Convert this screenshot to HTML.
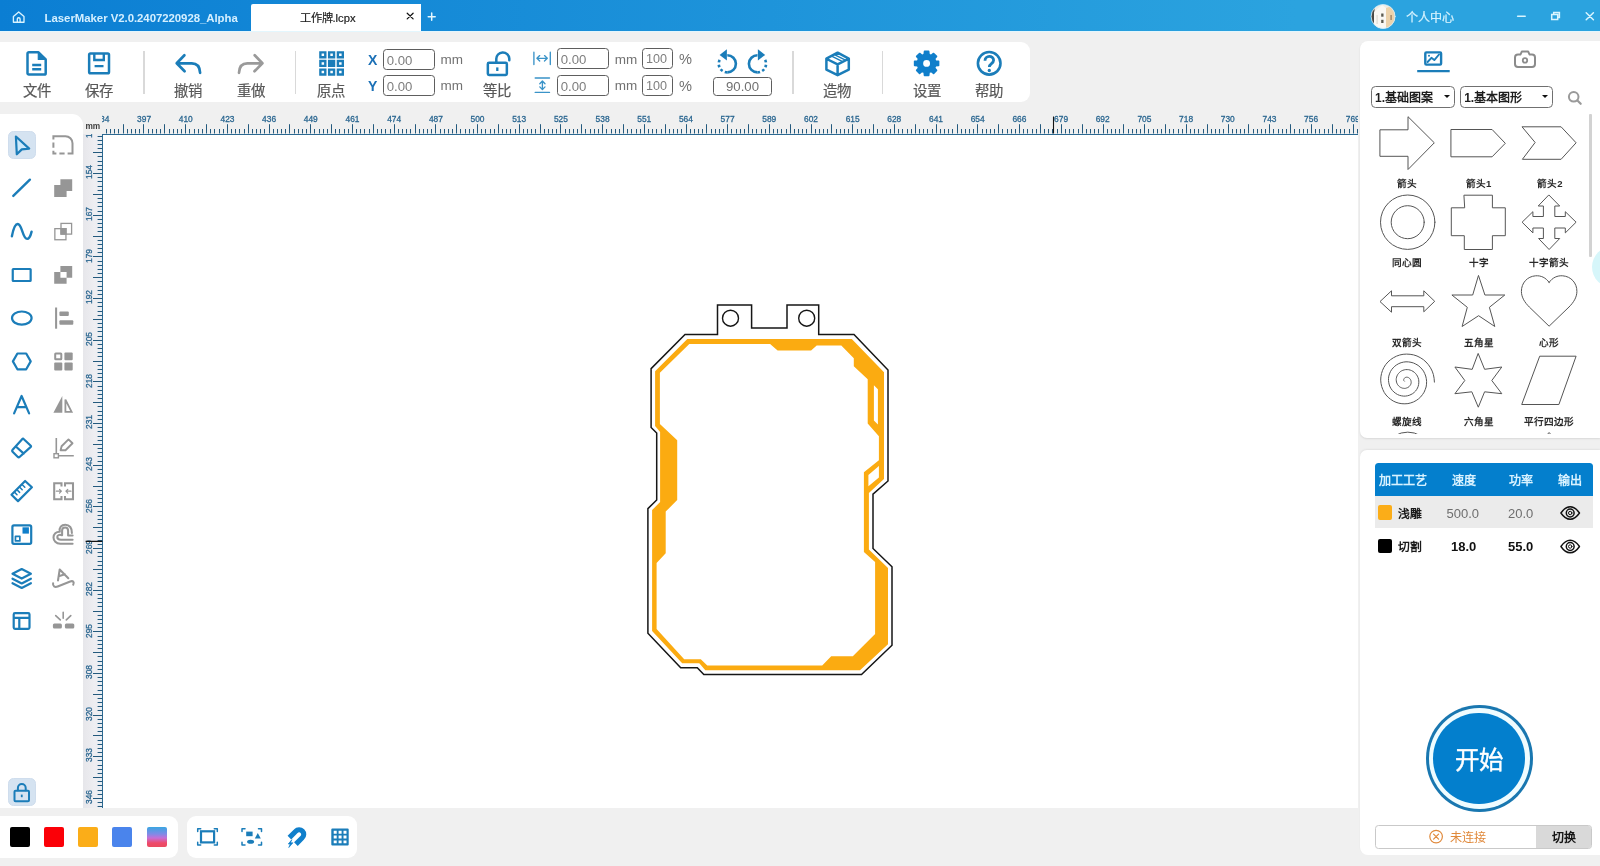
<!DOCTYPE html>
<html lang="zh-CN">
<head>
<meta charset="utf-8">
<title>LaserMaker V2.0.2407220928_Alpha</title>
<style>
html,body{margin:0;padding:0}
body{width:1600px;height:866px;overflow:hidden;position:relative;background:#f0f0f0;will-change:transform;font-family:"Liberation Sans",sans-serif;color:#222}
div,span{position:absolute;box-sizing:border-box;white-space:nowrap}
svg{position:absolute;left:0;top:0;overflow:visible}
.panel{background:#fff}
/* title bar */
#titlebar{left:0;top:0;width:1600px;height:30.5px;background:linear-gradient(90deg,#0b7ed3 0%,#2ba3df 81%,#2ba3df 100%)}
#titleline{left:0;top:30.5px;width:1600px;height:1.5px;background:#e3f6fd}
#tab{left:251px;top:3.7px;width:170px;height:27.5px;background:#fff;border-radius:2px 0 0 0}
#tabname{left:48.5px;top:4px;height:20px;line-height:20px;font-size:11.2px;font-weight:500;color:#1c1c1c;-webkit-text-stroke:.2px #1c1c1c}
#user{left:1406px;top:7.5px;height:20px;line-height:20px;font-size:12.1px;font-weight:500;color:#d6f3ff;-webkit-text-stroke:.2px #d6f3ff}
/* toolbar */
#toolbar{left:0;top:42px;width:1030px;height:60px;border-radius:0 9px 9px 0}
.tlabel{top:40.4px;height:18px;line-height:18px;font-size:14.4px;font-weight:500;color:#585858;-webkit-text-stroke:.2px #585858;text-align:center;width:60px}
.vsep{top:8.5px;width:1.5px;height:43px;background:#d9d9d9}
.inp{height:20.6px;border:1px solid #5e5e5e;border-radius:3.5px;background:#fff;font-size:13.2px;line-height:21.6px;color:#7e7e7e;padding-left:2.6px}
.unit{height:20px;line-height:21px;font-size:13.5px;color:#727272}
.xy{height:20px;line-height:20px;font-size:14px;font-weight:700;color:#1b70b6}
/* left tools */
#tools{left:0;top:113.6px;width:83px;height:694.4px;border-radius:0 11px 0 0}
.sel{width:27.8px;height:28px;border-radius:5.5px;background:#d5e3f1;border:1px solid #cfdded}
/* rulers */
#vruler{left:83.3px;top:133.5px;width:19.1px;height:674.5px;background:linear-gradient(90deg,#e6e6ea,#eeeef2 60%,#e9edf2);overflow:hidden}
#hruler{left:102.4px;top:113px;width:1255.8px;height:20.5px;overflow:hidden}
.hl{top:1.1px;width:30px;margin-left:-15px;text-align:center;height:10px;line-height:10px;font-size:8.4px;font-weight:400;color:#2a6690;-webkit-text-stroke:.28px #2a6690}
.vl{left:-8.9px;width:30px;height:10px;margin-top:-5px;line-height:10px;text-align:center;font-size:8.4px;font-weight:400;color:#2a6690;-webkit-text-stroke:.28px #2a6690;transform:rotate(-90deg)}
#canvas{left:102.4px;top:133.5px;width:1255.8px;height:674.6px;background:#fff;border-left:1px solid #2d6a92;border-top:1px solid #2d6a92}
/* bottom */
#swatches{left:0;top:816px;width:177.5px;height:42px;border-radius:0 9px 9px 0}
.sw{top:11px;width:20px;height:20px;border-radius:2px}
#viewtools{left:186.9px;top:816px;width:170.4px;height:42px;border-radius:9px}
/* right side */
#library{left:1360.2px;top:40.7px;width:239.8px;height:397px;border-radius:8px 0 0 7px;overflow:hidden;box-shadow:0 1px 2px rgba(0,0,0,.10)}
.dd{top:45.6px;height:21.4px;border:1px solid #707070;border-radius:4.5px;background:#fff;font-size:12px;font-weight:700;line-height:23.2px;color:#1e1e1e;padding-left:3px}
.caret{top:8.2px;width:0;height:0;border-left:3.2px solid transparent;border-right:3.2px solid transparent;border-top:3.6px solid #111}
.slabel{width:72px;margin-left:-36px;height:12px;line-height:12px;text-align:center;font-size:9.6px;font-weight:700;color:#2a2a2a}
#process{left:1360.2px;top:449.6px;width:239.8px;height:405px;border-radius:7px 0 0 8px;box-shadow:0 -1px 2px rgba(0,0,0,.06)}
#thead{left:14.8px;top:13.6px;width:218.2px;height:32.6px;background:#047fcd;border-radius:3.5px 3.5px 0 0;color:#d8f2ff;font-size:12.1px;font-weight:700}
#thead span{top:10.2px;height:16px;line-height:16px;width:60px;margin-left:-30px;text-align:center}
.row{left:14.8px;width:218.2px;height:32.6px}
.row span{top:10.5px;height:16px;line-height:16px}
.row .c{width:60px;margin-left:-30px;text-align:center;font-size:13px}
.row .n{left:23.3px;font-size:11.8px;font-weight:700;color:#1a1a1a}
.chip{left:2.7px;top:9.6px;width:14.6px;height:14.6px;border-radius:2px}
#start{left:65.8px;top:255.6px;width:106.6px;height:106.6px;border-radius:50%;background:#1977b0}
#start i{position:absolute;left:3px;top:3px;right:3px;bottom:3px;border-radius:50%;background:#effcff}
#start b{position:absolute;left:7.5px;top:7.5px;right:7.5px;bottom:7.5px;border-radius:50%;background:#037fcd;color:#fff;font-weight:500;font-size:24.5px;line-height:95px;-webkit-text-stroke:.4px #fff;text-align:center;letter-spacing:0}
#status{left:15.2px;top:375px;width:216.5px;height:24px;border:1px solid #c9c9c9;border-radius:3.5px;background:#fff;overflow:hidden}
#status .msg{left:73.5px;top:4.6px;height:16px;line-height:16px;font-size:12.1px;color:#e0893b}
#status .btn{left:159.5px;top:-1px;width:57px;height:24px;background:#d9d9d9;text-align:center;line-height:27px;font-size:12px;color:#141414;font-weight:700}
</style>
</head>
<body>

<!-- ===== title bar ===== -->
<div id="titlebar">
  <svg id="apptitle" width="260" height="30.5" viewBox="0 0 260 30.5"><text x="44.6" y="22" textLength="193.2" lengthAdjust="spacing" font-family="Liberation Sans, sans-serif" font-size="11.4" font-weight="700" fill="#d4efff">LaserMaker V2.0.2407220928_Alpha</text></svg>
  <div id="tab"><span id="tabname">工作牌.lcpx</span></div>
  <span id="user">个人中心</span>
</div>
<div id="titleline"></div>

<!-- ===== main toolbar ===== -->
<div id="toolbar" class="panel">
  <span class="tlabel" style="left:6.8px">文件</span>
  <span class="tlabel" style="left:69.4px">保存</span>
  <div class="vsep" style="left:143.3px"></div>
  <span class="tlabel" style="left:158.1px">撤销</span>
  <span class="tlabel" style="left:221px">重做</span>
  <div class="vsep" style="left:294.9px"></div>
  <span class="tlabel" style="left:301.3px">原点</span>
  <span class="xy" style="left:368px;top:8px">X</span>
  <span class="xy" style="left:368px;top:33.6px">Y</span>
  <div class="inp" style="left:383.1px;top:7.1px;width:51.9px">0.00</div>
  <div class="inp" style="left:383.1px;top:33.1px;width:51.9px">0.00</div>
  <span class="unit" style="left:440.6px;top:7.2px">mm</span>
  <span class="unit" style="left:440.6px;top:33px">mm</span>
  <span class="tlabel" style="left:467.2px">等比</span>
  <div class="inp" style="left:557.2px;top:6.3px;width:51.6px">0.00</div>
  <div class="inp" style="left:557.2px;top:33.1px;width:51.6px">0.00</div>
  <span class="unit" style="left:614.7px;top:7px">mm</span>
  <span class="unit" style="left:614.7px;top:33.4px">mm</span>
  <div class="inp" style="left:642.2px;top:6.3px;width:30.6px;font-size:12.6px;padding-left:2.8px">100</div>
  <div class="inp" style="left:642.2px;top:33.1px;width:30.6px;font-size:12.6px;padding-left:2.8px">100</div>
  <span class="unit" style="left:679px;top:7px;font-size:14.6px">%</span>
  <span class="unit" style="left:679px;top:33.8px;font-size:14.6px">%</span>
  <div class="inp" style="left:713.1px;top:35.2px;width:58.8px;height:18.6px;line-height:17.5px;padding-left:0;text-align:center;color:#707070">90.00</div>
  <div class="vsep" style="left:792.4px"></div>
  <span class="tlabel" style="left:807.2px">造物</span>
  <div class="vsep" style="left:881.8px"></div>
  <span class="tlabel" style="left:896.5px">设置</span>
  <span class="tlabel" style="left:958.9px">帮助</span>
</div>

<!-- ===== left tool palette ===== -->
<div id="tools" class="panel">
  <div class="sel" style="left:7.8px;top:17.3px"></div>
  <div class="sel" style="left:7.8px;top:664.3px"></div>
</div>

<!-- ===== rulers + canvas ===== -->
<div id="hruler"><span class="hl" style="left:0.0px">384</span><span class="hl" style="left:41.7px">397</span><span class="hl" style="left:83.4px">410</span><span class="hl" style="left:125.1px">423</span><span class="hl" style="left:166.7px">436</span><span class="hl" style="left:208.4px">449</span><span class="hl" style="left:250.1px">461</span><span class="hl" style="left:291.8px">474</span><span class="hl" style="left:333.5px">487</span><span class="hl" style="left:375.1px">500</span><span class="hl" style="left:416.8px">513</span><span class="hl" style="left:458.5px">525</span><span class="hl" style="left:500.2px">538</span><span class="hl" style="left:541.9px">551</span><span class="hl" style="left:583.5px">564</span><span class="hl" style="left:625.2px">577</span><span class="hl" style="left:666.9px">589</span><span class="hl" style="left:708.6px">602</span><span class="hl" style="left:750.3px">615</span><span class="hl" style="left:791.9px">628</span><span class="hl" style="left:833.6px">641</span><span class="hl" style="left:875.3px">654</span><span class="hl" style="left:917.0px">666</span><span class="hl" style="left:958.7px">679</span><span class="hl" style="left:1000.3px">692</span><span class="hl" style="left:1042.0px">705</span><span class="hl" style="left:1083.7px">718</span><span class="hl" style="left:1125.4px">730</span><span class="hl" style="left:1167.1px">743</span><span class="hl" style="left:1208.7px">756</span><span class="hl" style="left:1250.4px">769</span></div>
<div id="vruler"><span class="vl" style="top:-3.0px">141</span><span class="vl" style="top:38.7px">154</span><span class="vl" style="top:80.4px">167</span><span class="vl" style="top:122.0px">179</span><span class="vl" style="top:163.7px">192</span><span class="vl" style="top:205.3px">205</span><span class="vl" style="top:247.0px">218</span><span class="vl" style="top:288.7px">231</span><span class="vl" style="top:330.3px">243</span><span class="vl" style="top:372.0px">256</span><span class="vl" style="top:413.6px">269</span><span class="vl" style="top:455.3px">282</span><span class="vl" style="top:497.0px">295</span><span class="vl" style="top:538.6px">308</span><span class="vl" style="top:580.3px">320</span><span class="vl" style="top:621.9px">333</span><span class="vl" style="top:663.6px">346</span></div>
<div id="canvas"></div>

<!-- ===== bottom bars ===== -->
<div id="swatches" class="panel">
  <div class="sw" style="left:10px;background:#000"></div>
  <div class="sw" style="left:44.1px;background:#fb0007"></div>
  <div class="sw" style="left:78.1px;background:#fbad18"></div>
  <div class="sw" style="left:112.4px;background:#4a84ec"></div>
  <div class="sw" style="left:146.8px;background:linear-gradient(180deg,#3aa6e2 0%,#7f8be6 35%,#c66fd6 55%,#ee4a6a 80%,#ea4a5e 100%)"></div>
</div>
<div id="viewtools" class="panel"></div>

<!-- ===== right: shape library ===== -->
<div id="library" class="panel">
  <div class="dd" style="left:10.9px;width:84.4px">1.基础图案<div class="caret" style="left:72.4px"></div></div>
  <div class="dd" style="left:100px;width:92.6px">1.基本图形<div class="caret" style="left:80.8px"></div></div>
  <span class="slabel" style="left:47.1px;top:137.4px">箭头</span>
  <span class="slabel" style="left:118.4px;top:137.4px">箭头1</span>
  <span class="slabel" style="left:189.7px;top:137.4px">箭头2</span>
  <span class="slabel" style="left:47.3px;top:216.4px">同心圆</span>
  <span class="slabel" style="left:118.5px;top:216.4px">十字</span>
  <span class="slabel" style="left:189.2px;top:216.4px">十字箭头</span>
  <span class="slabel" style="left:47.3px;top:295.9px">双箭头</span>
  <span class="slabel" style="left:118.4px;top:295.9px">五角星</span>
  <span class="slabel" style="left:188.9px;top:295.9px">心形</span>
  <span class="slabel" style="left:47.3px;top:375.1px">螺旋线</span>
  <span class="slabel" style="left:118.4px;top:375.1px">六角星</span>
  <span class="slabel" style="left:188.9px;top:375.1px">平行四边形</span>
  <div style="left:228.6px;top:73px;width:3.6px;height:143px;background:#d2d2d2;border-radius:1px"></div>
  <div style="left:231.6px;top:205px;width:42px;height:42px;border-radius:50%;background:#d6f6fa"></div>
</div>

<!-- ===== right: process panel ===== -->
<div id="process" class="panel">
  <div id="thead">
    <span style="left:28.4px">加工工艺</span>
    <span style="left:88.8px">速度</span>
    <span style="left:146px">功率</span>
    <span style="left:195px">输出</span>
  </div>
  <div class="row" style="top:46.2px;background:#ebebeb">
    <div class="chip" style="background:#fbad18"></div>
    <span class="n">浅雕</span>
    <span class="c" style="left:87.8px;color:#6e6e6e">500.0</span>
    <span class="c" style="left:145.6px;color:#6e6e6e">20.0</span>
  </div>
  <div class="row" style="top:78.8px">
    <div class="chip" style="background:#000;top:10.2px"></div>
    <span class="n" style="top:10.8px">切割</span>
    <span class="c" style="left:88.6px;top:10.9px;font-weight:700;color:#111">18.0</span>
    <span class="c" style="left:145.6px;top:10.9px;font-weight:700;color:#111">55.0</span>
  </div>
  <div id="start"><i></i><b>开始</b></div>
  <div id="status">
    <span class="msg">未连接</span>
    <div class="btn">切换</div>
  </div>
</div>


<!-- ===== ruler ticks + canvas artwork ===== -->
<svg id="artwork" width="1600" height="866" viewBox="0 0 1600 866">
    <path d="M106.5 129V133.5M110.5 129V133.5M114.5 129V133.5M118.5 129V133.5M123.5 124.2V133.5M127.5 129V133.5M131.5 129V133.5M135.5 129V133.5M139.5 129V133.5M143.5 124.2V133.5M148.5 129V133.5M152.5 129V133.5M156.5 129V133.5M160.5 129V133.5M164.5 124.2V133.5M169.5 129V133.5M173.5 129V133.5M177.5 129V133.5M181.5 129V133.5M185.5 124.2V133.5M189.5 129V133.5M194.5 129V133.5M198.5 129V133.5M202.5 129V133.5M206.5 124.2V133.5M210.5 129V133.5M214.5 129V133.5M219.5 129V133.5M223.5 129V133.5M227.5 124.2V133.5M231.5 129V133.5M235.5 129V133.5M239.5 129V133.5M244.5 129V133.5M248.5 124.2V133.5M252.5 129V133.5M256.5 129V133.5M260.5 129V133.5M264.5 129V133.5M269.5 124.2V133.5M273.5 129V133.5M277.5 129V133.5M281.5 129V133.5M285.5 129V133.5M289.5 124.2V133.5M294.5 129V133.5M298.5 129V133.5M302.5 129V133.5M306.5 129V133.5M310.5 124.2V133.5M314.5 129V133.5M319.5 129V133.5M323.5 129V133.5M327.5 129V133.5M331.5 124.2V133.5M335.5 129V133.5M339.5 129V133.5M344.5 129V133.5M348.5 129V133.5M352.5 124.2V133.5M356.5 129V133.5M360.5 129V133.5M364.5 129V133.5M369.5 129V133.5M373.5 124.2V133.5M377.5 129V133.5M381.5 129V133.5M385.5 129V133.5M390.5 129V133.5M394.5 124.2V133.5M398.5 129V133.5M402.5 129V133.5M406.5 129V133.5M410.5 129V133.5M415.5 124.2V133.5M419.5 129V133.5M423.5 129V133.5M427.5 129V133.5M431.5 129V133.5M435.5 124.2V133.5M440.5 129V133.5M444.5 129V133.5M448.5 129V133.5M452.5 129V133.5M456.5 124.2V133.5M460.5 129V133.5M465.5 129V133.5M469.5 129V133.5M473.5 129V133.5M477.5 124.2V133.5M481.5 129V133.5M485.5 129V133.5M490.5 129V133.5M494.5 129V133.5M498.5 124.2V133.5M502.5 129V133.5M506.5 129V133.5M510.5 129V133.5M515.5 129V133.5M519.5 124.2V133.5M523.5 129V133.5M527.5 129V133.5M531.5 129V133.5M535.5 129V133.5M540.5 124.2V133.5M544.5 129V133.5M548.5 129V133.5M552.5 129V133.5M556.5 129V133.5M560.5 124.2V133.5M565.5 129V133.5M569.5 129V133.5M573.5 129V133.5M577.5 129V133.5M581.5 124.2V133.5M585.5 129V133.5M590.5 129V133.5M594.5 129V133.5M598.5 129V133.5M602.5 124.2V133.5M606.5 129V133.5M611.5 129V133.5M615.5 129V133.5M619.5 129V133.5M623.5 124.2V133.5M627.5 129V133.5M631.5 129V133.5M636.5 129V133.5M640.5 129V133.5M644.5 124.2V133.5M648.5 129V133.5M652.5 129V133.5M656.5 129V133.5M661.5 129V133.5M665.5 124.2V133.5M669.5 129V133.5M673.5 129V133.5M677.5 129V133.5M681.5 129V133.5M686.5 124.2V133.5M690.5 129V133.5M694.5 129V133.5M698.5 129V133.5M702.5 129V133.5M706.5 124.2V133.5M711.5 129V133.5M715.5 129V133.5M719.5 129V133.5M723.5 129V133.5M727.5 124.2V133.5M731.5 129V133.5M736.5 129V133.5M740.5 129V133.5M744.5 129V133.5M748.5 124.2V133.5M752.5 129V133.5M756.5 129V133.5M761.5 129V133.5M765.5 129V133.5M769.5 124.2V133.5M773.5 129V133.5M777.5 129V133.5M781.5 129V133.5M786.5 129V133.5M790.5 124.2V133.5M794.5 129V133.5M798.5 129V133.5M802.5 129V133.5M806.5 129V133.5M811.5 124.2V133.5M815.5 129V133.5M819.5 129V133.5M823.5 129V133.5M827.5 129V133.5M831.5 124.2V133.5M836.5 129V133.5M840.5 129V133.5M844.5 129V133.5M848.5 129V133.5M852.5 124.2V133.5M857.5 129V133.5M861.5 129V133.5M865.5 129V133.5M869.5 129V133.5M873.5 124.2V133.5M877.5 129V133.5M882.5 129V133.5M886.5 129V133.5M890.5 129V133.5M894.5 124.2V133.5M898.5 129V133.5M902.5 129V133.5M907.5 129V133.5M911.5 129V133.5M915.5 124.2V133.5M919.5 129V133.5M923.5 129V133.5M927.5 129V133.5M932.5 129V133.5M936.5 124.2V133.5M940.5 129V133.5M944.5 129V133.5M948.5 129V133.5M952.5 129V133.5M957.5 124.2V133.5M961.5 129V133.5M965.5 129V133.5M969.5 129V133.5M973.5 129V133.5M977.5 124.2V133.5M982.5 129V133.5M986.5 129V133.5M990.5 129V133.5M994.5 129V133.5M998.5 124.2V133.5M1002.5 129V133.5M1007.5 129V133.5M1011.5 129V133.5M1015.5 129V133.5M1019.5 124.2V133.5M1023.5 129V133.5M1027.5 129V133.5M1032.5 129V133.5M1036.5 129V133.5M1040.5 124.2V133.5M1044.5 129V133.5M1048.5 129V133.5M1052.5 129V133.5M1057.5 129V133.5M1061.5 124.2V133.5M1065.5 129V133.5M1069.5 129V133.5M1073.5 129V133.5M1078.5 129V133.5M1082.5 124.2V133.5M1086.5 129V133.5M1090.5 129V133.5M1094.5 129V133.5M1098.5 129V133.5M1103.5 124.2V133.5M1107.5 129V133.5M1111.5 129V133.5M1115.5 129V133.5M1119.5 129V133.5M1123.5 124.2V133.5M1128.5 129V133.5M1132.5 129V133.5M1136.5 129V133.5M1140.5 129V133.5M1144.5 124.2V133.5M1148.5 129V133.5M1153.5 129V133.5M1157.5 129V133.5M1161.5 129V133.5M1165.5 124.2V133.5M1169.5 129V133.5M1173.5 129V133.5M1178.5 129V133.5M1182.5 129V133.5M1186.5 124.2V133.5M1190.5 129V133.5M1194.5 129V133.5M1198.5 129V133.5M1203.5 129V133.5M1207.5 124.2V133.5M1211.5 129V133.5M1215.5 129V133.5M1219.5 129V133.5M1223.5 129V133.5M1228.5 124.2V133.5M1232.5 129V133.5M1236.5 129V133.5M1240.5 129V133.5M1244.5 129V133.5M1248.5 124.2V133.5M1253.5 129V133.5M1257.5 129V133.5M1261.5 129V133.5M1265.5 129V133.5M1269.5 124.2V133.5M1273.5 129V133.5M1278.5 129V133.5M1282.5 129V133.5M1286.5 129V133.5M1290.5 124.2V133.5M1294.5 129V133.5M1299.5 129V133.5M1303.5 129V133.5M1307.5 129V133.5M1311.5 124.2V133.5M1315.5 129V133.5M1319.5 129V133.5M1324.5 129V133.5M1328.5 129V133.5M1332.5 124.2V133.5M1336.5 129V133.5M1340.5 129V133.5M1344.5 129V133.5M1349.5 129V133.5M1353.5 124.2V133.5M1357.5 129V133.5" stroke="#245a7e" stroke-width="1" fill="none"/>
  <path d="M97.6 136.5H102.4M97.6 140.5H102.4M97.6 144.5H102.4M97.6 148.5H102.4M93 152.5H102.4M97.6 156.5H102.4M97.6 161.5H102.4M97.6 165.5H102.4M97.6 169.5H102.4M93 173.5H102.4M97.6 177.5H102.4M97.6 181.5H102.4M97.6 186.5H102.4M97.6 190.5H102.4M93 194.5H102.4M97.6 198.5H102.4M97.6 202.5H102.4M97.6 206.5H102.4M97.6 211.5H102.4M93 215.5H102.4M97.6 219.5H102.4M97.6 223.5H102.4M97.6 227.5H102.4M97.6 231.5H102.4M93 236.5H102.4M97.6 240.5H102.4M97.6 244.5H102.4M97.6 248.5H102.4M97.6 252.5H102.4M93 256.5H102.4M97.6 261.5H102.4M97.6 265.5H102.4M97.6 269.5H102.4M97.6 273.5H102.4M93 277.5H102.4M97.6 281.5H102.4M97.6 286.5H102.4M97.6 290.5H102.4M97.6 294.5H102.4M93 298.5H102.4M97.6 302.5H102.4M97.6 306.5H102.4M97.6 311.5H102.4M97.6 315.5H102.4M93 319.5H102.4M97.6 323.5H102.4M97.6 327.5H102.4M97.6 331.5H102.4M97.6 336.5H102.4M93 340.5H102.4M97.6 344.5H102.4M97.6 348.5H102.4M97.6 352.5H102.4M97.6 356.5H102.4M93 361.5H102.4M97.6 365.5H102.4M97.6 369.5H102.4M97.6 373.5H102.4M97.6 377.5H102.4M93 381.5H102.4M97.6 386.5H102.4M97.6 390.5H102.4M97.6 394.5H102.4M97.6 398.5H102.4M93 402.5H102.4M97.6 406.5H102.4M97.6 411.5H102.4M97.6 415.5H102.4M97.6 419.5H102.4M93 423.5H102.4M97.6 427.5H102.4M97.6 431.5H102.4M97.6 436.5H102.4M97.6 440.5H102.4M93 444.5H102.4M97.6 448.5H102.4M97.6 452.5H102.4M97.6 456.5H102.4M97.6 461.5H102.4M93 465.5H102.4M97.6 469.5H102.4M97.6 473.5H102.4M97.6 477.5H102.4M97.6 481.5H102.4M93 486.5H102.4M97.6 490.5H102.4M97.6 494.5H102.4M97.6 498.5H102.4M97.6 502.5H102.4M93 506.5H102.4M97.6 511.5H102.4M97.6 515.5H102.4M97.6 519.5H102.4M97.6 523.5H102.4M93 527.5H102.4M97.6 531.5H102.4M97.6 536.5H102.4M97.6 540.5H102.4M97.6 544.5H102.4M93 548.5H102.4M97.6 552.5H102.4M97.6 556.5H102.4M97.6 561.5H102.4M97.6 565.5H102.4M93 569.5H102.4M97.6 573.5H102.4M97.6 577.5H102.4M97.6 581.5H102.4M97.6 586.5H102.4M93 590.5H102.4M97.6 594.5H102.4M97.6 598.5H102.4M97.6 602.5H102.4M97.6 606.5H102.4M93 611.5H102.4M97.6 615.5H102.4M97.6 619.5H102.4M97.6 623.5H102.4M97.6 627.5H102.4M93 631.5H102.4M97.6 636.5H102.4M97.6 640.5H102.4M97.6 644.5H102.4M97.6 648.5H102.4M93 652.5H102.4M97.6 656.5H102.4M97.6 661.5H102.4M97.6 665.5H102.4M97.6 669.5H102.4M93 673.5H102.4M97.6 677.5H102.4M97.6 681.5H102.4M97.6 685.5H102.4M97.6 690.5H102.4M93 694.5H102.4M97.6 698.5H102.4M97.6 702.5H102.4M97.6 706.5H102.4M97.6 710.5H102.4M93 715.5H102.4M97.6 719.5H102.4M97.6 723.5H102.4M97.6 727.5H102.4M97.6 731.5H102.4M93 735.5H102.4M97.6 740.5H102.4M97.6 744.5H102.4M97.6 748.5H102.4M97.6 752.5H102.4M93 756.5H102.4M97.6 760.5H102.4M97.6 765.5H102.4M97.6 769.5H102.4M97.6 773.5H102.4M93 777.5H102.4M97.6 781.5H102.4M97.6 785.5H102.4M97.6 790.5H102.4M97.6 794.5H102.4M93 798.5H102.4M97.6 802.5H102.4M97.6 806.5H102.4" stroke="#245a7e" stroke-width="1" fill="none"/>
  <text x="85.4" y="128.7" font-family="Liberation Sans, sans-serif" font-size="8.3" font-weight="700" fill="#3c3c3c">mm</text>
  <!-- cursor position markers -->
  <path d="M1053.5 116.6V133.5M85.6 541.4H102.4" stroke="#141414" stroke-width="1.1" fill="none"/>

  <!-- engraving layer (orange) -->
  <path fill="#fbab11" fill-rule="evenodd" d="
    M687.3 339.1H851.8L884 372.2V479L868.9 493.1V549.5L888 568.1V644.2L860 670.3H705.3L699.3 663.3H682.2L652.1 631.1V510.1L660.1 502V432L655.1 426.1V371.2Z
    M689.3 343.9H770.1L777.6 350.6H811.1L816.7 345.6H841.3L853.8 358.2V366.2L867.7 379.3V423.6L878.9 436.2V460.3L863.9 472.3V552L875.1 562.1V634.1L852.8 656.2H831.2L822.2 665.5H707.3L700.8 659.3H684.2L656.6 629.1V562.9L665.7 553.3V511.6L677.2 500.1V440.2L659.9 424.1V372.7Z
    M873.9 385.3L877.9 389.3V424.6L873.9 420.6Z
    M868.4 475L878.9 465.9V477.5L868.4 486.3Z"/>
  <!-- cutting layer (black) -->
  <path fill="none" stroke="#161616" stroke-width="1.5" stroke-linejoin="miter" d="
    M717.5 305H751.6V328H787V305H818.7V334.5H854L888 370V481L873 494.2V548.5L892 566.7V645.2L861.5 674.6H703.8L697.3 667.8H680.7L647.9 633.2V508.6L656.7 500V433L651.1 427.5V368.6L685 334.5H717.5Z"/>
  <circle cx="730.5" cy="318.2" r="8" fill="none" stroke="#161616" stroke-width="1.4"/>
  <circle cx="806.7" cy="318.2" r="8" fill="none" stroke="#161616" stroke-width="1.4"/>
</svg>


<!-- ===== toolbar + title bar icons ===== -->
<svg id="tbicons" width="1600" height="866" viewBox="0 0 1600 866" fill="none" stroke-linecap="round" stroke-linejoin="round">
  <!-- home -->
  <path d="M13.4 16.6L18.7 12l5.3 4.6v5.6H13.4ZM17.3 22.2v-3.1a1.4 1.4 0 0 1 2.8 0v3.1" stroke="#d9f3ff" stroke-width="1.35"/>
  <!-- tab close / new tab -->
  <path d="M407.2 13.2l5.9 5.7M413.1 13.2l-5.9 5.7" stroke="#111" stroke-width="1.25"/>
  <path d="M428.2 16.7h7M431.7 13.1v7.2" stroke="#e4f7ff" stroke-width="1.5"/>
  <!-- avatar -->
  <clipPath id="av"><circle cx="1383.1" cy="16.5" r="12"/></clipPath>
  <g clip-path="url(#av)" stroke="none">
    <rect x="1371" y="4" width="25" height="25" fill="#f1ece2"/>
    <rect x="1371" y="4" width="3.5" height="25" fill="#4b4a46"/>
    <path d="M1374 12l8-7 4 3v21h-12Z" fill="#faf8f3"/>
    <path d="M1386 8l6-2 4 6v17h-10Z" fill="#ecd2ab"/>
    <rect x="1381.200" y="13.5" width="2.300" height="3.200" fill="#5b5a50"/>
    <rect x="1381.200" y="19.800" width="2.300" height="3.200" fill="#5b5a50"/>
    <rect x="1390.400" y="15" width="1.400" height="5" fill="#9a8466"/>
    <rect x="1376.500" y="15" width="1.200" height="9" fill="#dedad0"/>
  </g>
  <circle cx="1383.1" cy="16.5" r="12" stroke="#cfeefc" stroke-width=".8"/>
  <!-- window controls -->
  <path d="M1517.600 16.300h7.600" stroke="#d9f5ff" stroke-width="1.500"/>
  <path d="M1551.700 14.400h6v5.100h-6ZM1553.700 14.200v-1.600h5.700v5h-1.500" stroke="#d9f5ff" stroke-width="1.500" stroke-linejoin="miter"/>
  <path d="M1586.200 12.800l7.200 7M1593.400 12.800l-7.200 7" stroke="#d9f5ff" stroke-width="1.500"/>

  <!-- file -->
  <path d="M28.900 52.300h9.600l7.200 7.100v13.800a1.400 1.400 0 0 1-1.400 1.400h-15.400a1.400 1.400 0 0 1-1.400-1.400v-19.500a1.400 1.400 0 0 1 1.400-1.400Z" stroke="#1b7db9" stroke-width="2.500"/>
  <path d="M38.300 53v6.500h6.800Z" fill="#1b7db9" stroke="#1b7db9" stroke-width="1.200"/>
  <path d="M32.200 65h9M32.200 69.200h9" stroke="#1b7db9" stroke-width="2.400" stroke-linecap="butt"/>
  <!-- save -->
  <rect x="89.150" y="53.500" width="19.850" height="19.800" rx="1.300" stroke="#1b7db9" stroke-width="2.500"/>
  <path d="M94.300 53.800v6.200h9.500v-6.200M94.600 66.100h8.900" stroke="#1b7db9" stroke-width="2.400" stroke-linecap="butt" stroke-linejoin="miter"/>
  <!-- undo -->
  <path d="M184.400 55.300l-7.700 8 7.900 8M177.600 63.400h14.200c5.400 0 8 3.400 8.300 9.400" stroke="#1b7db9" stroke-width="2.700"/>
  <!-- redo -->
  <path d="M254.700 55.300l7.700 8-7.900 8M261.500 63.400h-14.200c-5.400 0-8 3.400-8.300 9.400" stroke="#9a9a9a" stroke-width="2.700"/>
  <!-- origin grid -->
  <path d="M319.20 51.20h7.3v7.3h-7.3ZM321.60 53.60h2.5v2.5h-2.5ZM327.95 51.20h7.3v7.3h-7.3ZM330.35 53.60h2.5v2.5h-2.5ZM336.70 51.20h7.3v7.3h-7.3ZM339.10 53.60h2.5v2.5h-2.5ZM319.20 59.80h7.3v7.3h-7.3ZM321.60 62.20h2.5v2.5h-2.5ZM327.95 59.80h7.3v7.3h-7.3ZM336.70 59.80h7.3v7.3h-7.3ZM339.10 62.20h2.5v2.5h-2.5ZM319.20 68.40h7.3v7.3h-7.3ZM321.60 70.80h2.5v2.5h-2.5ZM327.95 68.40h7.3v7.3h-7.3ZM330.35 70.80h2.5v2.5h-2.5ZM336.70 68.40h7.3v7.3h-7.3ZM339.10 70.80h2.5v2.5h-2.5Z" fill="#1b7db9" fill-rule="evenodd" stroke="none"/>
  <!-- proportional lock (open) -->
  <rect x="487.850" y="62.850" width="19" height="12.150" rx="1.200" stroke="#1b7db9" stroke-width="2.500"/>
  <path d="M496.300 62.400v-3.200a6.500 6.500 0 0 1 13-.600v1.600" stroke="#1b7db9" stroke-width="2.500"/>
  <path d="M497.300 67.400v3.600" stroke="#1b7db9" stroke-width="2.300" stroke-linecap="butt"/>
  <!-- width / height glyphs -->
  <path d="M533.900 52.200v12.300M550.300 52.200v12.300M537 58.300h10.200M539.700 55.600l-2.800 2.700 2.800 2.700M544.500 55.600l2.800 2.700-2.800 2.700" stroke="#3a93c8" stroke-width="1.350"/>
  <path d="M535.200 78h14.300M535.200 92.400h14.300M542.400 81.200v8.200M539.800 83.700l2.600-2.700 2.600 2.700M539.800 86.900l2.600 2.700 2.600-2.700" stroke="#3a93c8" stroke-width="1.350"/>
  <!-- rotate ccw -->
  <path d="M727.300 55.200a8.600 8.600 0 0 1 0 17.200" stroke="#1b7db9" stroke-width="2.600" stroke-linecap="butt"/>
  <path d="M727.300 72.400a8.600 8.600 0 0 1-6.900-13.700" stroke="#1b7db9" stroke-width="2.600" stroke-dasharray="2.600 2.300" stroke-linecap="butt"/>
  <path d="M719.600 54.900l7.300-5.600v11.200Z" fill="#1b7db9" stroke="none"/>
  <!-- rotate cw -->
  <path d="M757.500 55.200a8.600 8.600 0 0 0 0 17.200" stroke="#1b7db9" stroke-width="2.600" stroke-linecap="butt"/>
  <path d="M757.500 72.400a8.600 8.600 0 0 0 6.900-13.700" stroke="#1b7db9" stroke-width="2.600" stroke-dasharray="2.600 2.300" stroke-linecap="butt"/>
  <path d="M765.200 54.900l-7.300-5.600v11.200Z" fill="#1b7db9" stroke="none"/>
  <!-- box -->
  <path d="M837.600 52.700l11.200 5.900v11l-11.200 5.600-11.200-5.600v-11ZM826.800 59l10.800 5.400 10.800-5.400M837.600 64.400v10.400" stroke="#1b7db9" stroke-width="2.500"/>
  <path d="M832.100 56.400l10.600 5.300M834.900 54.900l10.600 5.300" stroke="#1b7db9" stroke-width="1.300"/>
  <!-- gear -->
  <path d="M924.23 54.51L924.55 51.47L928.65 51.47L928.97 54.51L931.21 55.44L933.59 53.52L936.48 56.41L934.56 58.79L935.49 61.03L938.53 61.35L938.53 65.45L935.49 65.77L934.56 68.01L936.48 70.39L933.59 73.28L931.21 71.36L928.97 72.29L928.65 75.33L924.55 75.33L924.23 72.29L921.99 71.36L919.61 73.28L916.72 70.39L918.64 68.01L917.71 65.77L914.67 65.45L914.67 61.35L917.71 61.03L918.64 58.79L916.72 56.41L919.61 53.52L921.99 55.44ZM922.30 63.40a4.30 4.30 0 1 0 8.60 0a4.30 4.30 0 1 0 -8.60 0Z" fill="#107fcb" fill-rule="evenodd" stroke="#107fcb" stroke-width="1.700"/>
  <!-- help -->
  <circle cx="989.200" cy="63.300" r="11.300" stroke="#1b7db9" stroke-width="2.600"/>
  <path d="M985 60.700c0-5.600 8.600-5.600 8.600-.400 0 3.300-4.300 3.300-4.300 6.700" stroke="#1b7db9" stroke-width="2.800" stroke-linecap="butt"/>
  <circle cx="989.300" cy="70.500" r="1.650" fill="#1b7db9" stroke="none"/>
</svg>


<!-- ===== left tool palette icons ===== -->
<svg id="toolicons" width="1600" height="866" viewBox="0 0 1600 866" fill="none" stroke-linecap="round" stroke-linejoin="round">
  <g stroke="#1b7db9" stroke-width="2.2">
    <!-- select -->
    <path d="M15.900 136.500l13.300 12.100-7.400.800-5 4.900Z" fill="#cde9fb"/>
    <!-- line -->
    <path d="M13.300 195.900l16.600-16.200" stroke-width="2.400"/>
    <!-- curve -->
    <path d="M11.900 236.200c1.600-8.300 3.200-12.200 5.800-12.200 4.600 0 4.700 14.900 9.400 14.900 2.400 0 3.600-3.500 4.500-7.300" stroke-width="2.400"/>
    <!-- rectangle -->
    <rect x="12.750" y="269" width="17.900" height="12" rx=".6"/>
    <!-- ellipse -->
    <ellipse cx="21.800" cy="318.100" rx="9.800" ry="6.600"/>
    <!-- polygon -->
    <path d="M12.900 361.400l4.500-7.900h8.800l4.500 7.900-4.500 7.900h-8.800Z"/>
    <!-- text -->
    <path d="M14.100 413.400l7.500-17.400 7.500 17.400M16.900 407.200h9.400"/>
    <!-- eraser -->
    <path d="M23.300 438.700l7.500 7.100a.8.800 0 0 1 0 1.100l-11 9.800a1.600 1.600 0 0 1-2.200 0l-5-4.900a1.400 1.400 0 0 1 0-2l10-11a.5.500 0 0 1 .7-.1ZM16.400 447l7.400 6.600"/>
    <!-- measure -->
    <path d="M25.100 481l6.800 6.300-13.900 13.800-6.500-6.400Z"/>
    <path d="M22.300 484.700l2.500 2.500M19.700 487.300l2.500 2.500M17.100 489.900l2.500 2.500M14.700 492.400l2.300 2.300" stroke-width="1.500"/>
    <!-- fill -->
    <rect x="12.400" y="525.400" width="18.800" height="18.400" rx="1.500"/>
    <rect x="22.500" y="527.300" width="6.400" height="6.300" fill="#107fcb" stroke="none"/>
    <rect x="15.450" y="536.350" width="4.400" height="4.600" stroke-width="1.700"/>
    <!-- layers -->
    <path d="M21.700 569l9.200 4.800-9.200 4.800-9.200-4.800ZM12.500 578.700l9.200 4.800 9.200-4.800M12.500 583.200l9.200 4.800 9.200-4.800"/>
    <!-- layout -->
    <rect x="13.700" y="613.200" width="15.800" height="15.700" rx="1.300"/>
    <path d="M13.700 617.900h15.800M19.300 617.900v11" stroke-linecap="butt"/>
    <!-- lock -->
    <rect x="14.500" y="790.800" width="14.500" height="10.400" rx="1" stroke-width="2"/>
    <path d="M17.900 790.300v-2.300a3.900 4 0 0 1 7.800 0v2.300" stroke-width="2"/>
    <path d="M21.750 794.600v2.600" stroke-width="1.800" stroke-linecap="butt"/>
  </g>
  <g stroke="#969696" stroke-width="2.050">
    <!-- dashed frame -->
    <path d="M53.400 139.600v-3.400h12a7.100 7.100 0 0 1 7.100 7.100v10.100h-4.900M64.600 153.400h-5.200M56.400 153.400h-3v-2.600M53.400 147.800v-5.200" stroke-width="2" stroke-linecap="butt" stroke-linejoin="miter"/>
    <!-- union -->
    <path d="M60.400 179.300h11.800v11.800h-5.600v5.800h-12.400v-11.800h6.200Z" fill="#969696" stroke="none"/>
    <!-- intersect -->
    <rect x="61" y="223.400" width="10.600" height="10.700" stroke-width="1.300" stroke-linejoin="miter"/>
    <rect x="54.850" y="228.650" width="11.100" height="11.100" stroke-width="1.300" stroke-linejoin="miter"/>
    <rect x="60.400" y="228" width="6.200" height="6.700" fill="#969696" stroke="none"/>
    <!-- exclude -->
    <path d="M60.400 266.100h11.800v11.700h-5.600v5.900h-12.400v-11.800h6.200ZM60.400 271.900v5.900h6.200v-5.900Z" fill="#969696" fill-rule="evenodd" stroke="none"/>
    <!-- align -->
    <path d="M56.100 307.500v21.200" stroke-linecap="butt"/>
    <rect x="59.400" y="311.400" width="9.400" height="4.600" rx="1" fill="#969696" stroke="none"/>
    <rect x="59.400" y="320.200" width="13.900" height="4.600" rx="1" fill="#969696" stroke="none"/>
    <!-- array -->
    <rect x="55.200" y="353.400" width="6.100" height="5.900" rx=".5" stroke-width="2"/>
    <rect x="64.400" y="352.400" width="8.300" height="7.900" rx="1" fill="#969696" stroke="none"/>
    <rect x="54.200" y="362.400" width="8.100" height="8" rx="1" fill="#969696" stroke="none"/>
    <rect x="64.400" y="362.400" width="8.300" height="8" rx="1" fill="#969696" stroke="none"/>
    <!-- mirror -->
    <path d="M53.400 412.800l8.900-16.900v16.900Z" fill="#969696" stroke="none"/>
    <path d="M65.400 399.600v12.300h6.200Z" stroke-width="1.800" stroke-linejoin="miter"/>
    <!-- coordinate pen -->
    <path d="M56.300 437.900v15.400M58.600 455.800h15.200" stroke-width="1.600" stroke-linecap="butt"/>
    <rect x="54" y="453.700" width="4.400" height="4.100" stroke-width="1.400" stroke-linejoin="miter"/>
    <path d="M60.600 450.200l1-4 6.900-6.800 4 3.900-7 6.900Z" stroke-width="1.900"/>
    <!-- join -->
    <path d="M61.500 486.400v-3.200h-7.300v16h7.300v-3.200M65 486.400v-3.200h8v16h-8v-3.200" stroke-linejoin="miter" stroke-linecap="butt"/>
    <path d="M56.300 491.200h5M59.500 489.300l1.900 1.900-1.900 1.900M71 491.200h-5M67.800 489.300l-1.900 1.900 1.900 1.900" stroke-width="1.200"/>
    <!-- offset heart -->
    <path d="M72.600 543.700h-12.300c-4.300 0-6.800-3-6.800-6.100 0-3.400 2.600-6 6.300-5.900-.9-4.100 1.600-7 5.500-7 4.300 0 6.700 3.400 6.600 8.200M72.600 539.700h-11.600c-2.400 0-3.700-1.200-3.700-2.700 0-1.800 1.800-2.700 4.800-1.800v-4.600c0-2 1.300-3.100 3-3.100 1.900 0 3 1.300 3 3.300v4.700h4.500"/>
    <!-- text on path -->
    <path d="M58 580.400l1.700-10.900 8.600 8.700M58.700 576.200l6.200-2M53.100 583.300c-.6 3 1.700 4.300 4.600 3.200l12.500-5c2.900-1.200 4.300.8 3 3.200"/>
    <!-- explode -->
    <rect x="52.900" y="623.400" width="9" height="5.200" rx="1.500" fill="#969696" stroke="none"/>
    <rect x="64.900" y="623.400" width="9.400" height="5.200" rx="1.500" fill="#969696" stroke="none"/>
    <path d="M63.200 612.300v6M55.700 615.600l4.600 4.300M70.800 615.600l-4.500 4.300" stroke-width="1.600"/>
  </g>
</svg>

<!-- ===== bottom view tool icons ===== -->
<svg id="viewicons" width="1600" height="866" viewBox="0 0 1600 866" fill="none" stroke="#1b7db9" stroke-linecap="round" stroke-linejoin="round">
  <!-- fit page -->
  <rect x="201" y="831.300" width="13.100" height="11.100" stroke-width="2.200" stroke-linejoin="miter"/>
  <path d="M197.700 831.600v-2.800h3M217.300 831.600v-2.800h-3M197.700 842.200v2.800h3M217.300 842.200v2.800h-3" stroke-width="1.500"/>
  <!-- fit selection -->
  <path d="M242 831.600v-2.800h3M261.500 831.600v-2.800h-3M242 842.200v2.800h3M261.500 842.200v2.800h-3" stroke-width="1.500"/>
  <rect x="246.200" y="831.600" width="6.400" height="4.600" fill="#1b7db9" stroke="none"/>
  <path d="M254.800 838.600l3-5.600 3 5.600Z" fill="#1b7db9" stroke="none"/>
  <ellipse cx="250.600" cy="841.700" rx="3.500" ry="2" fill="#1b7db9" stroke="none"/>
  <!-- snap magnet -->
  <path d="M289.400 837.600L295.750 831.250A4.600 4.600 0 1 1 302.250 837.750L295.900 844.100" stroke="#107fcb" stroke-width="5.100" stroke-linecap="butt"/>
  <path d="M291.600 840l-3.300 4h2l-1.500 3.500 4.100-4.700h-2.200Z" fill="#107fcb" stroke="#107fcb" stroke-width=".7"/>
  <!-- grid -->
  <path d="M332.300 828.500h15.400a1 1 0 0 1 1 1v14.900a1 1 0 0 1-1 1h-15.400a1 1 0 0 1-1-1v-14.900a1 1 0 0 1 1-1ZM333.700 830.800v2.900h3v-2.900ZM338.600 830.800v2.900h3v-2.900ZM343.500 830.800v2.900h3v-2.900ZM333.700 835.600v2.900h3v-2.900ZM338.600 835.600v2.900h3v-2.900ZM343.500 835.600v2.900h3v-2.900ZM333.700 840.400v2.900h3v-2.900ZM338.600 840.400v2.900h3v-2.900ZM343.500 840.400v2.900h3v-2.900Z" fill="#1b7db9" fill-rule="evenodd" stroke="none"/>
</svg>


<!-- ===== right panel icons + shape library ===== -->
<svg id="libicons" width="1600" height="866" viewBox="0 0 1600 866" fill="none" stroke-linecap="round" stroke-linejoin="round">
  <!-- tabs -->
  <rect x="1425.300" y="52.400" width="15.800" height="12.200" rx="1" stroke="#1b7db9" stroke-width="2.400"/>
  <path d="M1427.600 62l3.800-4.200 2.900 2.300 4.700-5.600" stroke="#1b7db9" stroke-width="1.900"/>
  <circle cx="1429" cy="55.700" r="1" fill="#1b7db9"/>
  <path d="M1417.200 71.100h32.500" stroke="#1b7db9" stroke-width="2.200" stroke-linecap="butt"/>
  <path d="M1518 54.600h2.400l1.500-3.200h6.200l1.500 3.200h2.400a3 3 0 0 1 3 3v6.400a3 3 0 0 1-3 3h-14a3 3 0 0 1-3-3v-6.400a3 3 0 0 1 3-3Z" stroke="#8b8b8b" stroke-width="2"/>
  <circle cx="1525" cy="60.400" r="2.200" stroke="#8b8b8b" stroke-width="1.800"/>
  <!-- search -->
  <circle cx="1573.700" cy="96.800" r="4.800" stroke="#9a9a9a" stroke-width="2"/>
  <path d="M1577.400 100.500l3.300 3.300" stroke="#9a9a9a" stroke-width="2.200"/>

  <g stroke="#555" stroke-width="1" stroke-linejoin="miter">
    <!-- row 1 -->
    <path d="M1380.300 129.800H1408V116.700L1434.300 142.800L1408 169.500V156.300H1380.300Z"/>
    <path d="M1451.300 129.500H1492.100L1505.300 143.300L1492.100 156.800H1451.300Z"/>
    <path d="M1522.400 126.800H1561.100L1576.100 142.800L1561.100 159.300H1522.400L1534.900 142.800Z"/>
    <!-- row 2 -->
    <circle cx="1407.700" cy="222.200" r="27.200"/>
    <circle cx="1407.700" cy="222.200" r="16.500"/>
    <path d="M1464.300 195.200H1492.400V207.800H1505.300V235.700H1492.400V249.500H1464.300V235.700H1451.300V207.800H1464.300Z"/>
    <path d="M1549.100 195.200L1559.700 206H1554.800V216.500H1565.300V211.700L1576.100 222.200L1565.300 232.900V228H1554.800V238.500H1559.700L1549.100 249.500L1538.600 238.500H1543.400V228H1532.900V232.900L1522.100 222.200L1532.900 211.700V216.500H1543.400V206H1538.600Z"/>
    <!-- row 3 -->
    <path d="M1380.300 301.300L1391.500 290.800V295.800H1423.800V290.800L1434.700 301.300L1423.800 311.800V306.700H1391.500V311.800Z"/>
    <path d="M1478.600 275.800L1484.900 295H1504.800L1489.400 307.300L1494.800 326.500L1478.600 315.700L1462.100 326.500L1467.300 307.300L1451.900 295H1472.300Z"/>
    <path d="M1549.100 282.400C1552.500 277.500 1557.500 275.400 1562.700 275.800C1571 276.400 1577 283 1576.900 291.500C1576.800 297.500 1573.500 302.500 1569 307L1549.100 326.200L1529.300 307C1524.800 302.500 1521.500 297.500 1521.400 291.500C1521.300 283 1527.300 276.400 1535.600 275.800C1540.800 275.400 1545.800 277.500 1549.100 282.400Z"/>
    <!-- row 4 -->
    <path d="M1404.4 381.2L1404.3 381.1L1404.1 380.9L1403.9 380.7L1403.8 380.4L1403.7 380.2L1403.7 379.8L1403.7 379.5L1403.8 379.2L1404.0 378.8L1404.2 378.5L1404.4 378.2L1404.8 377.9L1405.1 377.6L1405.6 377.4L1406.0 377.3L1406.6 377.2L1407.1 377.2L1407.6 377.3L1408.2 377.5L1408.7 377.7L1409.2 378.1L1409.7 378.5L1410.1 379.0L1410.5 379.6L1410.8 380.2L1411.0 380.9L1411.1 381.6L1411.2 382.4L1411.1 383.1L1410.9 383.9L1410.6 384.7L1410.1 385.4L1409.6 386.1L1409.0 386.7L1408.2 387.3L1407.4 387.7L1406.5 388.0L1405.6 388.3L1404.6 388.4L1403.6 388.3L1402.6 388.2L1401.6 387.8L1400.6 387.4L1399.7 386.8L1398.8 386.1L1398.1 385.2L1397.4 384.3L1396.9 383.2L1396.5 382.1L1396.3 380.9L1396.2 379.6L1396.3 378.4L1396.6 377.1L1397.0 375.9L1397.6 374.7L1398.4 373.6L1399.3 372.6L1400.3 371.7L1401.5 370.9L1402.8 370.3L1404.2 369.9L1405.7 369.6L1407.2 369.6L1408.7 369.7L1410.2 370.1L1411.6 370.6L1413.0 371.4L1414.3 372.3L1415.5 373.4L1416.5 374.7L1417.4 376.1L1418.1 377.7L1418.6 379.3L1418.8 381.0L1418.8 382.8L1418.6 384.5L1418.2 386.3L1417.5 388.0L1416.6 389.6L1415.5 391.1L1414.2 392.4L1412.7 393.6L1411.0 394.5L1409.2 395.3L1407.4 395.8L1405.4 396.1L1403.4 396.1L1401.4 395.8L1399.4 395.3L1397.5 394.5L1395.7 393.4L1394.0 392.1L1392.5 390.6L1391.2 388.9L1390.1 387.0L1389.3 385.0L1388.8 382.8L1388.5 380.6L1388.5 378.3L1388.8 376.1L1389.5 373.9L1390.4 371.7L1391.6 369.7L1393.1 367.9L1394.8 366.2L1396.7 364.8L1398.8 363.6L1401.1 362.7L1403.5 362.1L1406.0 361.8L1408.5 361.9L1411.0 362.3L1413.5 363.0L1415.8 364.1L1418.1 365.4L1420.1 367.1L1421.9 369.0L1423.5 371.1L1424.7 373.5L1425.7 376.0L1426.3 378.7L1426.6 381.4L1426.5 384.2L1426.1 387.0L1425.2 389.6L1424.1 392.2L1422.5 394.6L1420.7 396.9L1418.6 398.8L1416.2 400.5L1413.6 401.9L1410.8 402.9L1407.9 403.6L1404.9 403.8L1401.9 403.7L1398.9 403.2L1396.0 402.3L1393.2 401.0L1390.6 399.3L1388.2 397.3L1386.0 395.0L1384.2 392.4L1382.8 389.5L1381.7 386.5L1381.0 383.3L1380.7 380.1L1380.9 376.8L1381.5 373.6L1382.5 370.4L1383.9 367.4L1385.7 364.6L1387.9 362.0L1390.5 359.7L1393.3 357.8L1396.4 356.2L1399.7 355.0L1403.1 354.3L1406.6 354.1L1410.1 354.3L1413.6 354.9L1417.0 356.0L1420.2 357.6L1423.3 359.6L1426.0 362.0L1428.4 364.7L1430.5 367.8L1432.2 371.1L1433.4 374.6L1434.1 378.3L1434.4 382.1" stroke-linejoin="round"/>
    <path d="M1478.300 353.800L1484.600 369.300L1501.800 367L1491.800 380.500L1501.800 393.700L1484.600 391.800L1478.300 407.200L1471.800 391.800L1454.900 393.700L1464.800 380.500L1454.900 367L1471.800 369.300Z"/>
    <path d="M1540.100 356.200H1576.100L1558.900 404.500H1522.100Z"/>
    <!-- row 5 (clipped by panel) -->
    <path d="M1395.500 435.400a24 24 0 0 1 24.500 0M1544.500 437.700l4.600-5.200 4.600 5.200" clip-path="url(#libclip)"/>
  </g>
  <clipPath id="libclip"><rect x="1360" y="420" width="240" height="13.900"/></clipPath>

  <!-- eye toggles -->
  <g stroke="#111" stroke-width="1.400">
    <path d="M1560.900 513c5.800-8.400 12.800-8.400 18.600 0-5.800 8.400-12.800 8.400-18.600 0Z"/>
    <circle cx="1570.200" cy="513" r="3.900" stroke-width="1.500"/>
    <circle cx="1570.200" cy="513" r="1.700" stroke-width="1"/>
    <path d="M1560.900 546.500c5.800-8.400 12.800-8.400 18.600 0-5.800 8.400-12.800 8.400-18.600 0Z"/>
    <circle cx="1570.200" cy="546.500" r="3.900" stroke-width="1.500"/>
    <circle cx="1570.200" cy="546.500" r="1.700" stroke-width="1"/>
  </g>
  <!-- disconnected -->
  <circle cx="1436.100" cy="836.600" r="6.300" stroke="#e0893b" stroke-width="1.200"/>
  <path d="M1433.600 834.100l5 5M1438.600 834.100l-5 5" stroke="#e0893b" stroke-width="1.200"/>
</svg>

<!--SVG-LAYERS-->
</body>
</html>
